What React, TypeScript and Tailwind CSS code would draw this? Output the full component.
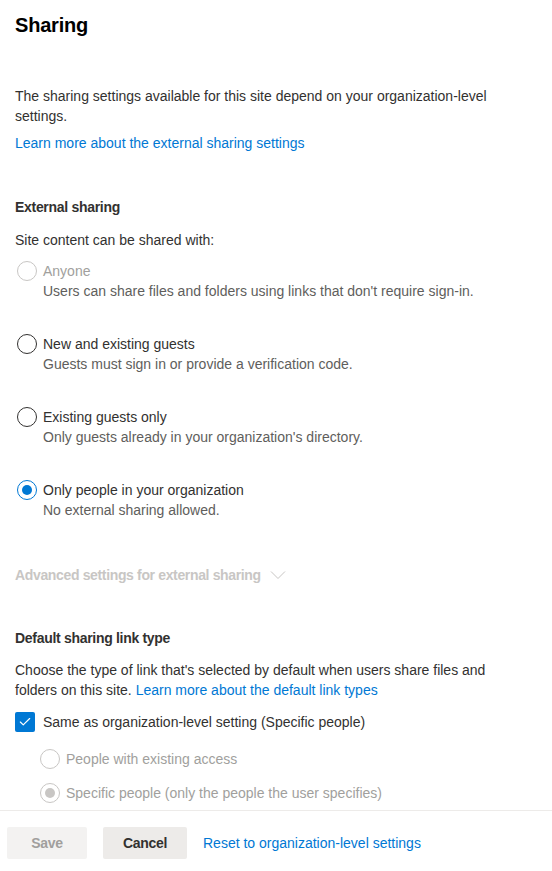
import { Check } from 'lucide-react'

type Option = {
  label: string
  desc: string
  checked?: boolean
  disabled?: boolean
}

const options: Option[] = [
  { label: 'Anyone', desc: "Users can share files and folders using links that don't require sign-in.", disabled: true },
  { label: 'New and existing guests', desc: 'Guests must sign in or provide a verification code.' },
  { label: 'Existing guests only', desc: "Only guests already in your organization's directory." },
  { label: 'Only people in your organization', desc: 'No external sharing allowed.', checked: true },
]

function Radio({ checked, disabled }: { checked?: boolean; disabled?: boolean }) {
  const border = disabled ? 'border-[#c8c6c4]' : checked ? 'border-[#0078d4]' : 'border-[#323130]'
  const dot = disabled ? 'bg-[#c8c6c4]' : 'bg-[#0078d4]'
  return (
    <span className={`flex h-5 w-5 shrink-0 items-center justify-center rounded-full border bg-white ${border}`}>
      {checked && <span className={`h-[10px] w-[10px] rounded-full ${dot}`} />}
    </span>
  )
}

export default function App() {
  return (
    <div className="min-h-[871px] w-[552px] bg-white font-['Segoe_UI','Liberation_Sans',sans-serif] text-[14px] leading-5 text-[#323130]">
      <div className="px-[15px] pt-[11px]">
        <h1 className="text-[20px] font-bold leading-7 tracking-[-0.2px] text-black">Sharing</h1>

        <p className="mt-[47px]">
          The sharing settings available for this site depend on your organization-level
          <br />
          settings.
        </p>
        <a className="mt-[7px] block text-[#0078d4]" href="#">
          Learn more about the external sharing settings
        </a>

        <h2 className="mt-[44px] font-semibold tracking-[-0.3px]">External sharing</h2>
        <p className="mt-[13px]">Site content can be shared with:</p>

        <div className="mt-[11px] flex flex-col gap-[33px]">
          {options.map((o) => (
            <div key={o.label} className="flex items-start gap-[6px] pl-[2px]">
              <Radio checked={o.checked} disabled={o.disabled} />
              <div>
                <div className={o.disabled ? 'text-[#a19f9d]' : ''}>{o.label}</div>
                <div className="text-[#605e5c]">{o.desc}</div>
              </div>
            </div>
          ))}
        </div>

        <div className="mt-[45px] flex items-center gap-[9px] font-semibold tracking-[-0.35px] text-[#c8c6c4]">
          <span>Advanced settings for external sharing</span>
          {/* thin chevron */}
          <svg width="16" height="10" viewBox="0 0 16 10" fill="none" stroke="#c8c6c4" strokeWidth="1">
            <path d="M1 1.5l7 7 7-7" />
          </svg>
        </div>

        <h2 className="mt-[43px] font-semibold tracking-[-0.3px]">Default sharing link type</h2>
        <p className="mt-[12px]">
          Choose the type of link that's selected by default when users share files and
          <br />
          folders on this site.{' '}
          <a className="text-[#0078d4]" href="#">
            Learn more about the default link types
          </a>
        </p>

        <div className="mt-[12px] flex items-center gap-2">
          <span className="flex h-5 w-5 items-center justify-center rounded-[2px] bg-[#0078d4] text-white">
            <Check size={14} strokeWidth={2} />
          </span>
          <span>Same as organization-level setting (Specific people)</span>
        </div>

        <div className="mt-[17px] flex items-center gap-[6px] pl-[25px] text-[#a19f9d]">
          <Radio disabled />
          <span>People with existing access</span>
        </div>
        <div className="mt-[14px] flex items-center gap-[6px] pl-[25px] text-[#a19f9d]">
          <Radio checked disabled />
          <span>Specific people (only the people the user specifies)</span>
        </div>
      </div>

      <div className="mt-[7px] border-t border-[#edebe9] px-[7px] pt-[16px]">
        <div className="flex items-center gap-4">
          <button className="h-8 w-20 rounded-[2px] bg-[#f3f2f1] font-semibold tracking-[-0.3px] text-[#a19f9d]">Save</button>
          <button className="h-8 w-[84px] rounded-[2px] bg-[#edebe9] font-semibold tracking-[-0.3px] text-[#323130]">Cancel</button>
          <a className="text-[#0078d4]" href="#">
            Reset to organization-level settings
          </a>
        </div>
      </div>
    </div>
  )
}
